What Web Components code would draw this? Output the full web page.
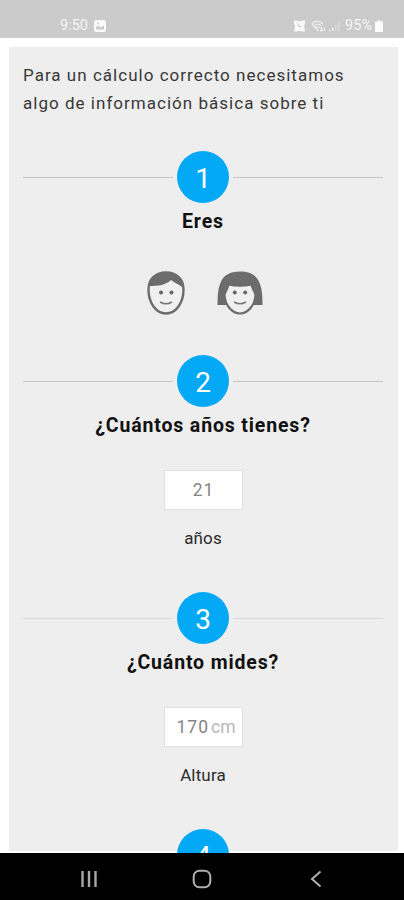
<!DOCTYPE html>
<html lang="es">
<head>
<meta charset="utf-8">
<meta name="viewport" content="width=device-width, initial-scale=1">
<title>Cálculo</title>
<style>
  html, body { margin: 0; height: 100%; }
  body {
    background: #fff;
    color: #222;
    font-family: Roboto, "Liberation Sans", sans-serif;
    overflow: hidden;
  }
</style>
</head>
<body>
<app-screen>
  <status-bar slot="top" time="9:50" battery="95%"></status-bar>
  <intro-text>Para un cálculo correcto necesitamos<br>algo de información básica sobre ti</intro-text>
  <form-step number="1" heading="Eres" style="height: 204px">
    <face-picker></face-picker>
  </form-step>
  <form-step number="2" heading="¿Cuántos años tienes?" style="height: 237px">
    <value-field value="21" label="años"></value-field>
  </form-step>
  <form-step number="3" heading="¿Cuánto mides?" style="height: 237px; --rule: #dadada">
    <value-field value="170" unit="cm" label="Altura"></value-field>
  </form-step>
  <form-step number="4"></form-step>
  <nav-bar slot="bottom"></nav-bar>
</app-screen>

<script>
class AppScreen extends HTMLElement {
    constructor() {
        super();
        this.attachShadow({ mode: 'open' });
        this.shadowRoot.innerHTML = `
      <style>
        :host { display: flex; flex-direction: column; height: 100vh; overflow: hidden; }
        main { flex: 1; min-height: 0; box-sizing: border-box; padding: 9px 6px 2px 9px; overflow: hidden; }
        .panel { box-sizing: border-box; height: 100%; padding: 14px 15px 0 14px; background: #eee; }
      </style>
      <slot name="top"></slot>
      <main><div class="panel"><slot></slot></div></main>
      <slot name="bottom"></slot>
    `;
    }
}

class StatusBar extends HTMLElement {
    connectedCallback() {
        this.attachShadow({ mode: 'open' });
        this.shadowRoot.innerHTML = `
      <style>
        :host {
          display: flex; flex: none; align-items: center; justify-content: space-between;
          box-sizing: border-box; height: 38px; padding: 13px 21px 0 60px;
          background: #cbcbcb; color: #f6f6f6; font-size: 14.5px; line-height: 25px;
        }
        div { display: flex; align-items: center; }
        svg { display: block; }
        .image { margin-left: 6px; }
        .wifi { margin-left: 6px; }
        .signal { margin: 0 5px 0 2px; }
        .battery { margin-left: 3px; }
      </style>
      <div>
        <span>${this.getAttribute('time')}</span>
        <svg class="image" width="12" height="12" viewBox="0 0 12 12">
          <rect width="12" height="12" rx="2.5" fill="#fafafa"/>
          <path d="M2 9.5V7L4.500 6 6.500 7.500 10 5.500V9.500Z" fill="#cbcbcb"/>
          <circle cx="4" cy="3.6" r="1" fill="#cbcbcb"/>
        </svg>
      </div>
      <div>
        <svg width="11" height="12" viewBox="0 0 11 12">
          <path d="M0 .5h3L5.500 1.500 8 .5h3V4L10 6l1 5.500H8.500L5.500 11 2.500 11.500H0L1 6 0 4Z" fill="#f8f8f8"/>
          <path d="M3.500 3.500 5.500 6.500H7.500" fill="none" stroke="#cbcbcb" stroke-width="1.200"/>
        </svg>
        <svg class="wifi" width="15" height="12" viewBox="0 0 15 12" fill="none" stroke="#f0f0f0" stroke-width="1.200">
          <path d="M.7 4Q6 -1.800 12 4M2.700 6Q6.500 2 10 6M4.800 8Q6.500 6 8.500 8M1 4.500 7.500 11"/>
          <path d="M10.500 7v4M9.300 9.700l1.200 1.500 1.200-1.500M13.300 11V7.500"/>
        </svg>
        <svg class="signal" width="12" height="12" viewBox="0 0 12 12">
          <path d="M1 11V9.500h1.500V11ZM4 11V7.500h1.500V11Z" fill="#eee"/>
          <path d="M7 11V5h1.500v6ZM10 11V2h1.500v9Z" fill="#dadada"/>
        </svg>
        <span>${this.getAttribute('battery')}</span>
        <svg class="battery" width="8" height="12" viewBox="0 0 8 12">
          <path d="M2.500 .5h3v1H8V12H0V1.500h2.500Z" fill="#fdfdfd"/>
        </svg>
      </div>
    `;
    }
}

class IntroText extends HTMLElement {
    constructor() {
        super();
        this.attachShadow({ mode: 'open' });
        this.shadowRoot.innerHTML = `
      <style>
        :host {
          display: block; height: 90px; color: #383838;
          font-size: 17px; line-height: 28px; letter-spacing: 1.020px; white-space: nowrap;
        }
      </style>
      <slot></slot>
    `;
    }
}

class FormStep extends HTMLElement {
    connectedCallback() {
        this.attachShadow({ mode: 'open' });
        this.shadowRoot.innerHTML = `
      <style>
        :host { display: flex; flex-direction: column; box-sizing: border-box; }
        .divider { display: flex; align-items: center; gap: 4px; }
        .divider::before, .divider::after { content: ""; flex: 1; height: 1px; background: var(--rule, #c5c5c5); }
        .number {
          width: 52px; height: 52px; border-radius: 50%; background: #03a9f4; color: #fff;
          font-size: 28px; line-height: 56px; text-align: center;
        }
        h2 {
          margin: 5px 0 0; color: #111; text-align: center; white-space: nowrap;
          font-size: 19.5px; font-weight: 700; line-height: 28px; letter-spacing: .850px;
        }
      </style>
      <div class="divider"><div class="number">${this.getAttribute('number')}</div></div>
      <h2>${this.getAttribute('heading') || ''}</h2>
      <slot></slot>
    `;
    }
}

class FacePicker extends HTMLElement {
    constructor() {
        super();
        this.attachShadow({ mode: 'open' });
        this.shadowRoot.innerHTML = `
      <style>
        :host { display: flex; justify-content: center; gap: 32px; margin: 35px 0 0 4px; }
        svg { display: block; }
      </style>
      <svg width="38" height="44" viewBox="0 0 38 44">
        <path d="M19 1.500C9 1.500 1.500 7.500 1.500 18.500 1.500 32 9 42.500 19 42.500S36.500 32 36.500 18.500C36.500 7.500 29 1.500 19 1.500Z" fill="#f0f0f0" stroke="#6c6c6c" stroke-width="2.400"/>
        <path d="M2 16C2 6 9 1.500 19 1.500S36 7 36 17C33 13.500 28 12.500 24 9 19 14 12 15 2 15Z" fill="#6c6c6c"/>
        <g fill="#666"><circle cx="14" cy="21.500" r="2"/><circle cx="24.500" cy="21.500" r="2"/></g>
        <path d="M13 31Q19 34.500 25 31" fill="none" stroke="#777" stroke-width="1.500"/>
      </svg>
      <svg width="46" height="44" viewBox="0 0 46 44">
        <path d="M.5 34C.5 25 1 18 3 13 6 4 13 .500 23 .500S40 4 43 13C45 18 45.500 25 45.500 34Z" fill="#6c6c6c"/>
        <path d="M11.500 13.500Q23 16 34.500 13.500C35 18 38 20 38.500 24 38 34 31 42.500 23 42.500S8 34 7.500 24C8 20 11 18 11.500 13.500Z" fill="#f0f0f0" stroke="#6c6c6c" stroke-width="2.200"/>
        <g fill="#666"><circle cx="17.800" cy="21.500" r="2"/><circle cx="28.200" cy="21.500" r="2"/></g>
        <path d="M17 31Q23 34.500 29 31" fill="none" stroke="#777" stroke-width="1.500"/>
      </svg>
    `;
    }
}

class ValueField extends HTMLElement {
    connectedCallback() {
        const unit = this.getAttribute('unit');
        this.attachShadow({ mode: 'open' });
        this.shadowRoot.innerHTML = `
      <style>
        :host { display: flex; flex-direction: column; align-items: center; margin-top: 30px; }
        .box {
          display: flex; align-items: center; justify-content: center; gap: 2px;
          box-sizing: border-box; width: 79px; height: 40px; margin-left: 1px;
          border: 1px solid #e0e0e0; background: #fff; color: #858585;
          font-size: 17.5px; letter-spacing: 1px;
        }
        .box.with-unit { padding-left: 5px; }
        .unit { color: #b8b8b8; letter-spacing: 0; }
        .label { margin-top: 14px; color: #2b2b2b; font-size: 17px; line-height: 28px; letter-spacing: .150px; }
      </style>
      <div class="box${unit ? ' with-unit' : ''}"><span>${this.getAttribute('value')}</span>${unit ? `<span class="unit">${unit}</span>` : ''}</div>
      <div class="label">${this.getAttribute('label')}</div>
    `;
    }
}

class NavBar extends HTMLElement {
    constructor() {
        super();
        this.attachShadow({ mode: 'open' });
        this.shadowRoot.innerHTML = `
      <style>
        :host {
          display: flex; flex: none; align-items: center;
          box-sizing: border-box; height: 47px; padding: 4px 0 0 80px; background: #000;
        }
        svg { display: block; }
        .home { margin: 0 98px 0 94px; }
      </style>
      <svg width="18" height="18" viewBox="0 0 18 18"><path d="M2.500 1v16M9 1v16M15.500 1v16" stroke="#a8a8a8" stroke-width="2.400"/></svg>
      <svg class="home" width="20" height="20" viewBox="0 0 20 20"><rect x="1.700" y="1.700" width="16.600" height="16.600" rx="5.800" fill="none" stroke="#b0b0b0" stroke-width="2"/></svg>
      <svg width="12" height="18" viewBox="0 0 12 18"><path d="M10.500 1.500 2 9l8.500 7.500" fill="none" stroke="#b0b0b0" stroke-width="2"/></svg>
    `;
    }
}

customElements.define('app-screen', AppScreen);
customElements.define('status-bar', StatusBar);
customElements.define('intro-text', IntroText);
customElements.define('form-step', FormStep);
customElements.define('face-picker', FacePicker);
customElements.define('value-field', ValueField);
customElements.define('nav-bar', NavBar);
</script>
</body>
</html>
